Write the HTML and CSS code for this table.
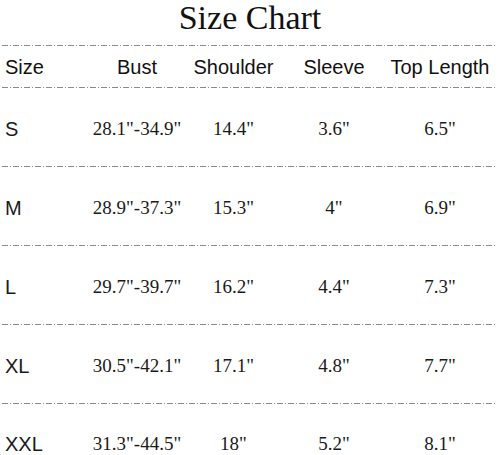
FILE: index.html
```html
<!DOCTYPE html>
<html>
<head>
<meta charset="utf-8">
<link rel="stylesheet" href="styles.css">
</head>
<body>
<div class="chart">
  <h1 class="title">Size Chart</h1>
  <div class="rule"></div>
  <div class="row head">
    <div class="size">Size</div>
    <div>Bust</div>
    <div>Shoulder</div>
    <div>Sleeve</div>
    <div>Top Length</div>
  </div>
  <div class="rule"></div>
  <div class="row data">
    <div class="size">S</div>
    <div>28.1"-34.9"</div>
    <div>14.4"</div>
    <div>3.6"</div>
    <div>6.5"</div>
  </div>
  <div class="rule"></div>
  <div class="row data">
    <div class="size">M</div>
    <div>28.9"-37.3"</div>
    <div>15.3"</div>
    <div>4"</div>
    <div>6.9"</div>
  </div>
  <div class="rule"></div>
  <div class="row data">
    <div class="size">L</div>
    <div>29.7"-39.7"</div>
    <div>16.2"</div>
    <div>4.4"</div>
    <div>7.3"</div>
  </div>
  <div class="rule"></div>
  <div class="row data">
    <div class="size">XL</div>
    <div>30.5"-42.1"</div>
    <div>17.1"</div>
    <div>4.8"</div>
    <div>7.7"</div>
  </div>
  <div class="rule"></div>
  <div class="row data last">
    <div class="size">XXL</div>
    <div>31.3"-44.5"</div>
    <div>18"</div>
    <div>5.2"</div>
    <div>8.1"</div>
  </div>
</div>
</body>
</html>
```

FILE: styles.css
```css
html, body {
  margin: 0;
  padding: 0;
  background: #ffffff;
  width: 500px;
  height: 455px;
  overflow: hidden;
}

.chart {
  color: #111111;
}

.title {
  margin: 0;
  height: 45px;
  font-family: "Liberation Serif", "Times New Roman", serif;
  font-weight: normal;
  font-size: 34px;
  line-height: 36px;
  text-align: center;
}

.rule {
  height: 1px;
  margin: 0 5px 0 2px;
  background: repeating-linear-gradient(to right,
    #8a8a8a 0 6px,
    transparent 6px 8px,
    #8a8a8a 8px 9px,
    transparent 9px 11px);
}

.row {
  display: grid;
  grid-template-columns: 89px 96px 97px 104px 108px;
  align-items: center;
  text-align: center;
}

.row .size {
  text-align: left;
  padding-left: 5px;
  font-family: "Liberation Sans", Arial, sans-serif;
  font-size: 20px;
  letter-spacing: 0;
}

.head {
  height: 41px;
  font-family: "Liberation Sans", Arial, sans-serif;
  font-size: 20px;
  padding-top: 1px;
  box-sizing: border-box;
}

.data {
  height: 78px;
  font-family: "Liberation Serif", "Times New Roman", serif;
  font-size: 19px;
  line-height: 22px;
  padding-top: 3px;
  box-sizing: border-box;
  color: #1a1a1a;
}

.data.last {
  height: 51px;
  align-items: end;
  padding-top: 0;
  padding-bottom: 0;
}
```
